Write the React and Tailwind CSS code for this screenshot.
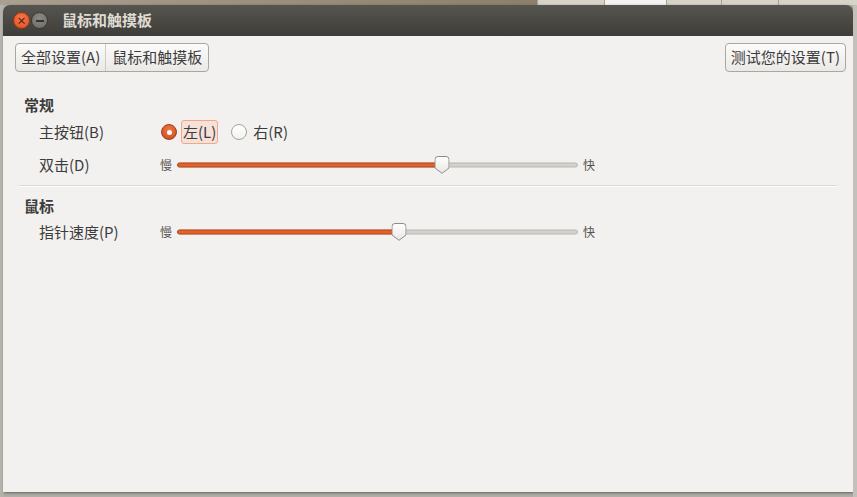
import React from 'react';

const font = { fontFamily: '"Noto Sans CJK SC", "Noto Sans", sans-serif' };

const Handle = () => (
  <svg width="15" height="18" viewBox="0 0 15 18" className="absolute top-1/2 -translate-y-1/2 -translate-x-1/2">
    <defs>
      <linearGradient id="hg" x1="0" y1="0" x2="0" y2="1">
        <stop offset="0" stopColor="#ffffff" />
        <stop offset="1" stopColor="#e9e7e3" />
      </linearGradient>
    </defs>
    <path d="M3.5 0.5 H11.5 Q14.5 0.5 14.5 3.5 V12 L7.5 17.3 L0.5 12 V3.5 Q0.5 0.5 3.5 0.5 Z" fill="url(#hg)" stroke="#8f8c86" strokeWidth="1" />
  </svg>
);

const Slider = ({ pos }) => (
  <div className="flex items-center h-5">
    <span className="text-[12px] text-[#55534e] w-[17px]">慢</span>
    <div className="relative w-[401px] h-5">
      <div className="absolute left-0 right-0 top-1/2 -translate-y-1/2 h-[5px] rounded-full bg-[#d3d1cd] border border-[#b9b6b0]" />
      <div className="absolute left-0 top-1/2 -translate-y-1/2 h-[5px] rounded-full bg-[#e2622a] border border-[#b5461a]" style={{ width: pos }} />
      <div className="absolute top-0 bottom-0" style={{ left: pos }}>
        <Handle />
      </div>
    </div>
    <span className="text-[12px] text-[#55534e] ml-[5px]">快</span>
  </div>
);

export default function App() {
  return (
    <div className="w-[857px] h-[497px] bg-[#b1aea8] overflow-hidden flex flex-col" style={font}>
      {/* strip of the window behind */}
      <div className="h-[5px] flex shrink-0 bg-[#d7d3c7]">
        <div className="w-[537px] bg-gradient-to-r from-[#aaa08f] to-[#8c7f6c]" />
        <div className="w-[67px] border-l border-[#a8a396]" />
        <div className="w-[62px] border-l border-[#a8a396] bg-[#f5f4f2]" />
        <div className="w-[55px] border-l border-[#a8a396]" />
        <div className="w-[57px] border-l border-[#a8a396]" />
        <div className="flex-1 border-l border-[#a8a396]" />
      </div>
      <div className="flex flex-1">
        <div className="w-[3px] bg-[#b6b3ad]" />
        <div className="w-[850px] h-[487px] flex flex-col rounded-t-[7px] overflow-hidden shadow-[1px_1px_3px_rgba(0,0,0,0.45)]">
          {/* title bar */}
          <div className="h-[31px] bg-gradient-to-b from-[#57554f] to-[#3e3d39] flex items-center pl-[10px]">
            <div className="w-[17px] h-[17px] rounded-full bg-[radial-gradient(circle_at_50%_35%,#f57a4e,#dc4d1f)] border border-[#9a3612] flex items-center justify-center">
              <span className="text-[10px] leading-none text-[#5a1a05] font-bold">×</span>
            </div>
            <div className="w-[17px] h-[17px] ml-[1px] rounded-full bg-[radial-gradient(circle_at_50%_35%,#8a8984,#6c6b66)] border border-[#3a3936] flex items-center justify-center">
              <div className="w-[8px] h-[2px] bg-[#34332f]" />
            </div>
            <span className="ml-[14px] text-[15px] font-bold text-[#dfdbd2]">鼠标和触摸板</span>
          </div>
          {/* content */}
          <div className="flex-1 bg-[#f2f1f0] flex flex-col text-[15px] text-[#3c3c3c]">
            <div className="flex justify-between items-center pl-[12px] pr-[7px] pt-[7px]">
              <div className="flex h-[29px] border border-[#aaa7a1] rounded-[4px] bg-gradient-to-b from-[#fbfbfa] to-[#ebe9e6] overflow-hidden">
                <div className="px-[5px] flex items-center border-r border-[#cfccc6]">全部设置(A)</div>
                <div className="px-[6px] flex items-center">鼠标和触摸板</div>
              </div>
              <div className="h-[29px] px-[5px] flex items-center border border-[#aaa7a1] rounded-[4px] bg-gradient-to-b from-[#fbfbfa] to-[#ebe9e6]">
                测试您的设置(T)
              </div>
            </div>

            <div className="pl-[21px] mt-[23px] h-5 flex items-center font-bold">常规</div>

            <div className="flex items-center h-6 mt-[5px]">
              <span className="pl-[36px] w-[157px]">主按钮(B)</span>
              <div className="flex items-center">
                <div className="w-[16px] h-[16px] ml-[1px] rounded-full bg-[radial-gradient(circle_at_50%_35%,#ee7a45,#c9471a)] border border-[#a53d15] flex items-center justify-center">
                  <div className="w-[5px] h-[5px] rounded-full bg-white" />
                </div>
                <div className="ml-[4px] h-[24px] px-[1px] flex items-center border border-[#f0a88a] rounded-[3px] bg-[#f5e1d8]">左(L)</div>
                <div className="ml-[13px] w-[16px] h-[16px] rounded-full bg-gradient-to-b from-white to-[#f3f2f0] border border-[#a5a29c]" />
                <span className="ml-[6px]">右(R)</span>
              </div>
            </div>

            <div className="flex items-center h-6 mt-[9px]">
              <span className="pl-[36px] w-[157px]">双击(D)</span>
              <Slider pos={265} />
            </div>

            <div className="mx-[16px] mt-[8px] h-[2px] border-t border-[#dcdad6] border-b border-b-[#fbfbfa]" />

            <div className="pl-[21px] mt-[9px] h-5 flex items-center font-bold">鼠标</div>

            <div className="flex items-center h-6 mt-[4px]">
              <span className="pl-[36px] w-[157px]">指针速度(P)</span>
              <Slider pos={222} />
            </div>
          </div>
        </div>
        <div className="flex-1 bg-[#c3c0b9]" />
      </div>
    </div>
  );
}
